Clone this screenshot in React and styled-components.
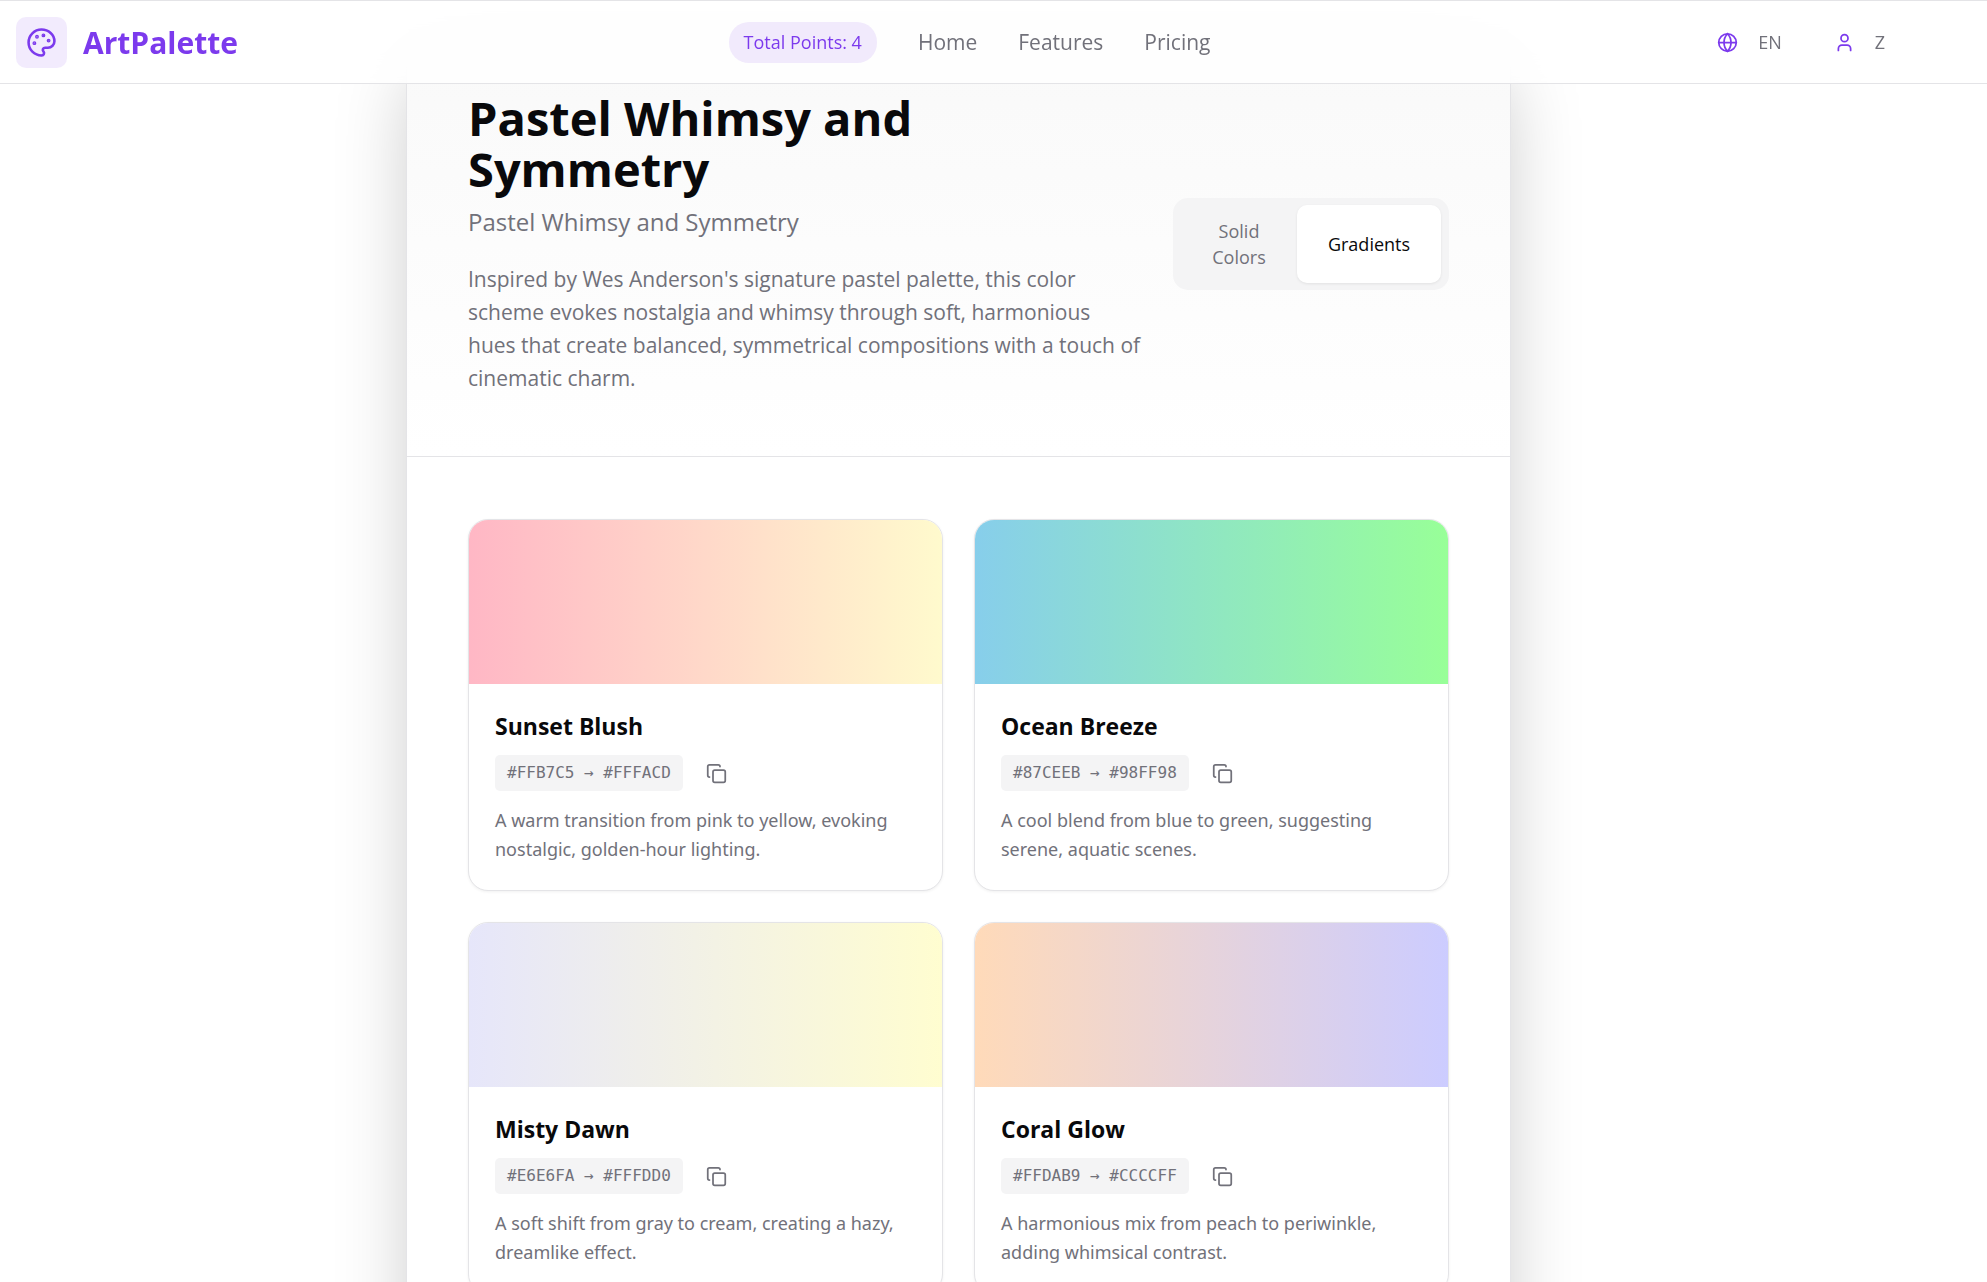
import React, { useState } from "react";
import styled, { createGlobalStyle } from "styled-components";
import { Palette, Globe, User, Copy } from "lucide-react";

const color = {
  ink: "#09090b",
  muted: "#71717a",
  line: "#e4e4e7",
  soft: "#f4f4f5",
  violet: "#7c3aed",
  violetSoft: "rgba(124, 58, 237, 0.1)",
};

const GlobalStyle = createGlobalStyle`
  *, *::before, *::after { box-sizing: border-box; }
  html { scrollbar-width: none; }
  body {
    margin: 0;
    background: #fff;
    color: ${color.ink};
    font-family: "Open Sans", "Noto Sans", sans-serif;
    font-size: 18px;
  }
  h1, h2, p { margin: 0; }
  button { font: inherit; border: 0; background: none; padding: 0; cursor: pointer; }
  a { color: inherit; text-decoration: none; }
`;

const Header = styled.header`
  position: fixed;
  inset: 0 0 auto 0;
  z-index: 10;
  border: 1px solid ${color.line};
  border-width: 1px 0;
  background: rgba(255, 255, 255, 0.8);
  backdrop-filter: blur(12px);
`;

const HeaderInner = styled.div`
  display: flex;
  align-items: center;
  justify-content: space-between;
  height: 82px;
  margin-right: 70px;
  padding: 0 16px;
`;

const Brand = styled.a`
  display: flex;
  align-items: center;
  gap: 16px;
  color: ${color.violet};
  font-size: 30px;
  font-weight: 700;
`;

const BrandMark = styled.span`
  display: grid;
  padding: 10px;
  border-radius: 10px;
  background: ${color.violetSoft};
`;

const Nav = styled.nav`
  display: flex;
  align-items: center;
  gap: 41px;
  color: ${color.muted};
  font-size: 21px;
`;

const Points = styled.span`
  padding: 8px 15px;
  border-radius: 20px;
  background: ${color.violetSoft};
  color: ${color.violet};
  font-size: 18px;
  line-height: 25px;
`;

const Account = styled.div`
  display: flex;
  gap: 20px;
`;

const AccountButton = styled.button`
  display: flex;
  align-items: center;
  gap: 20px;
  padding: 8px 16px;
  color: ${color.muted};
  font-size: 18px;

  svg { color: ${color.violet}; }
`;

const Main = styled.main`
  margin-right: 70px;
  padding: 31px 16px 80px;
`;

const Panel = styled.section`
  max-width: 1105px;
  margin: 0 auto;
  overflow: hidden;
  border: 1px solid ${color.line};
  border-radius: 31px;
  background: #fff;
  box-shadow: 0 32px 80px -12px rgba(0, 0, 0, 0.25);
`;

const Intro = styled.div`
  display: flex;
  align-items: center;
  justify-content: space-between;
  gap: 25px;
  padding: 61px;
  border-bottom: 1px solid ${color.line};
  background: linear-gradient(to bottom, #f9f9f9, #fff);
`;

const IntroText = styled.div`
  flex: 1;
  color: ${color.muted};
`;

const Title = styled.h1`
  margin-bottom: 9px;
  color: ${color.ink};
  font-size: 47px;
  font-weight: 700;
  line-height: 51px;
`;

const Subtitle = styled.p`
  margin-bottom: 23px;
  font-size: 24px;
  line-height: 36px;
`;

const Lead = styled.p`
  font-size: 21px;
  line-height: 33px;
`;

const Tabs = styled.div`
  display: grid;
  grid-template-columns: 116px 144px;
  padding: 7px 8px;
  border-radius: 15px;
  background: ${color.soft};
`;

const Tab = styled.button`
  padding: 13px 28px;
  border-radius: 10px;
  background: ${(p) => (p.$active ? "#fff" : "transparent")};
  box-shadow: ${(p) => (p.$active ? "0 1px 3px rgba(0, 0, 0, 0.08)" : "none")};
  color: ${(p) => (p.$active ? color.ink : color.muted)};
  font-size: 18px;
  line-height: 26px;
`;

const Grid = styled.div`
  display: grid;
  grid-template-columns: repeat(2, 1fr);
  gap: 31px;
  padding: 62px 61px;
`;

const Card = styled.article`
  overflow: hidden;
  border: 1px solid ${color.line};
  border-radius: 20px;
  background: #fff;
  box-shadow: 0 1px 3px rgba(0, 0, 0, 0.06);
`;

const Swatch = styled.div`
  height: 164px;
  background: linear-gradient(to right, ${(p) => p.$from}, ${(p) => p.$to});
`;

const CardBody = styled.div`
  padding: 26px;
`;

const CardTitle = styled.h2`
  margin-bottom: 13px;
  font-size: 23px;
  font-weight: 700;
  line-height: 32px;
`;

const CodeRow = styled.div`
  display: flex;
  align-items: center;
  gap: 13px;
  margin-bottom: 15px;
  color: ${color.muted};
`;

const Code = styled.code`
  padding: 0 12px;
  border-radius: 5px;
  background: ${color.soft};
  font-family: "DejaVu Sans Mono", monospace;
  font-size: 16px;
  line-height: 36px;
`;

const CopyButton = styled.button`
  display: grid;
  padding: 0 10px;
  color: ${color.muted};
`;

const CardText = styled.p`
  color: ${color.muted};
  font-family: "Noto Sans", "Open Sans", sans-serif;
  font-size: 18px;
  line-height: 29px;
`;

const gradients = [
  { name: "Sunset Blush", from: "#FFB7C5", to: "#FFFACD", text: "A warm transition from pink to yellow, evoking nostalgic, golden-hour lighting." },
  { name: "Ocean Breeze", from: "#87CEEB", to: "#98FF98", text: "A cool blend from blue to green, suggesting serene, aquatic scenes." },
  { name: "Misty Dawn", from: "#E6E6FA", to: "#FFFDD0", text: "A soft shift from gray to cream, creating a hazy, dreamlike effect." },
  { name: "Coral Glow", from: "#FFDAB9", to: "#CCCCFF", text: "A harmonious mix from peach to periwinkle, adding whimsical contrast." },
];

function GradientCard({ name, from, to, text }) {
  const code = `${from} → ${to}`;
  return (
    <Card>
      <Swatch $from={from} $to={to} />
      <CardBody>
        <CardTitle>{name}</CardTitle>
        <CodeRow>
          <Code>{code}</Code>
          <CopyButton type="button" aria-label={`Copy ${name}`} onClick={() => navigator.clipboard?.writeText(code)}>
            <Copy size={21} />
          </CopyButton>
        </CodeRow>
        <CardText>{text}</CardText>
      </CardBody>
    </Card>
  );
}

export default function App() {
  const [tab, setTab] = useState("Gradients");
  return (
    <>
      <GlobalStyle />
      <Header>
        <HeaderInner>
          <Brand href="#">
            <BrandMark><Palette size={31} /></BrandMark>
            ArtPalette
          </Brand>
          <Nav>
            <Points>Total Points: 4</Points>
            <a href="#home">Home</a>
            <a href="#features">Features</a>
            <a href="#pricing">Pricing</a>
          </Nav>
          <Account>
            <AccountButton type="button"><Globe size={21} />EN</AccountButton>
            <AccountButton type="button"><User size={21} />Z</AccountButton>
          </Account>
        </HeaderInner>
      </Header>
      <Main>
        <Panel>
          <Intro>
            <IntroText>
              <Title>Pastel Whimsy and Symmetry</Title>
              <Subtitle>Pastel Whimsy and Symmetry</Subtitle>
              <Lead>
                Inspired by Wes Anderson's signature pastel palette, this color scheme evokes nostalgia and whimsy
                through soft, harmonious
                <br />
                hues that create balanced, symmetrical compositions with a touch of cinematic charm.
              </Lead>
            </IntroText>
            <Tabs role="tablist">
              {["Solid Colors", "Gradients"].map((label) => (
                <Tab key={label} type="button" role="tab" aria-selected={tab === label} $active={tab === label} onClick={() => setTab(label)}>
                  {label}
                </Tab>
              ))}
            </Tabs>
          </Intro>
          <Grid>
            {gradients.map((g) => <GradientCard key={g.name} {...g} />)}
          </Grid>
        </Panel>
      </Main>
    </>
  );
}
